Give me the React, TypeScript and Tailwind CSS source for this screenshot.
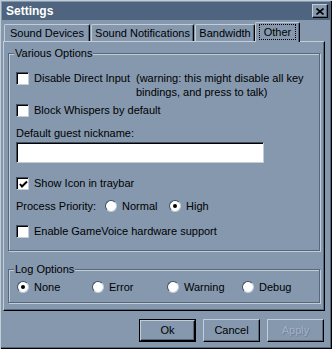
import React from 'react'

function Check({ checked = false }: { checked?: boolean }) {
  return (
    <span className="w-[13px] h-[13px] shrink-0 bg-white border border-t-[#3f4e60] border-l-[#3f4e60] border-r-[#c3cdd8] border-b-[#c3cdd8] shadow-[inset_1px_1px_0_#000] flex items-center justify-center">
      {checked && (
        <svg width="9" height="9" viewBox="0 0 9 9" className="ml-[1px] mt-[1px]">
          <polyline points="1,4 3,6.5 8,1.5" fill="none" stroke="#000" strokeWidth="2" />
        </svg>
      )}
    </span>
  )
}

function Radio({ on = false }: { on?: boolean }) {
  return (
    <span className="w-[12px] h-[12px] shrink-0 rounded-full bg-white border border-t-[#3f4e60] border-l-[#3f4e60] border-r-[#c3cdd8] border-b-[#c3cdd8] flex items-center justify-center">
      {on && <span className="w-[4px] h-[4px] rounded-full bg-black" />}
    </span>
  )
}

function CheckRow({ label, checked, className = '' }: { label: string; checked?: boolean; className?: string }) {
  return (
    <div className={`flex items-start leading-[14px] ${className}`}>
      <span className="mt-[1px]">
        <Check checked={checked} />
      </span>
      <span className="ml-[5px]">{label}</span>
    </div>
  )
}

export default function App() {
  const tabs = [
    { label: 'Sound Devices', w: 'w-[86px]' },
    { label: 'Sound Notifications', w: 'w-[103px]' },
    { label: 'Bandwidth', w: 'w-[60px]' },
  ]
  const logLevels = ['None', 'Error', 'Warning', 'Debug']

  return (
    <div className="w-[332px] h-[349px] bg-[#8598ae] font-['Liberation_Sans',Arial,sans-serif] text-[11px] text-black p-[2px] flex flex-col select-none shadow-[inset_1px_1px_0_#c3cdd8,inset_-1px_-1px_0_#000,inset_-2px_-2px_0_#56687c]">
      {/* Title bar */}
      <div className="h-[18px] bg-[#4e647f] flex items-center justify-between pl-[4px] pr-[2px]">
        <span className="text-white font-bold text-[12px] leading-none">Settings</span>
        <span className="w-[16px] h-[14px] bg-[#8598ae] border border-t-[#c3cdd8] border-l-[#c3cdd8] border-r-black border-b-black shadow-[inset_-1px_-1px_0_#56687c] flex items-center justify-center">
          <svg width="8" height="7" viewBox="0 0 8 7">
            <path d="M0.5 0.5 L7.5 6.5 M7.5 0.5 L0.5 6.5" stroke="#000" strokeWidth="1.6" />
          </svg>
        </span>
      </div>

      {/* Tabs */}
      <div className="mt-[2px] ml-[2px] flex items-end h-[19px]">
        {tabs.map((t, i) => (
          <div
            key={t.label}
            className={`${t.w} ${i > 0 ? 'ml-[1px]' : ''} h-[17px] rounded-tl-[2px] rounded-tr-[2px] border-t border-l border-r border-t-[#c3cdd8] border-l-[#c3cdd8] border-r-black shadow-[inset_-1px_0_0_#56687c] flex items-center justify-center leading-none`}
          >
            {t.label}
          </div>
        ))}
        <div className="relative z-10 w-[45px] h-[20px] -mb-px bg-[#8598ae] rounded-tl-[2px] rounded-tr-[2px] border-t border-l border-r border-t-[#c3cdd8] border-l-[#c3cdd8] border-r-black shadow-[inset_-1px_0_0_#56687c] flex items-start justify-center pt-[1px]">
          <span className="border border-dotted border-black px-[4px] leading-[14px]">Other</span>
        </div>
      </div>

      {/* Panel */}
      <div className="ml-[1px] w-[322px] h-[270px] border-t border-l border-r border-b border-t-[#c3cdd8] border-l-[#c3cdd8] border-r-black border-b-black shadow-[inset_-1px_-1px_0_#56687c] pt-[5px] pl-[4px]">
        <fieldset className="w-[312px] border border-[#56687c] shadow-[1px_1px_0_#c3cdd8,inset_1px_1px_0_#c3cdd8]">
          <legend className="ml-[5px] px-[1px] leading-[13px] bg-[#8598ae]">Various Options</legend>
          <div className="pl-[7px] pb-[12px]">
            <div className="mt-[11px] flex items-start leading-[14px]">
              <span className="mt-[1px]">
                <Check />
              </span>
              <span className="ml-[5px] w-[102px]">Disable Direct Input</span>
              <span>
                (warning: this might disable all key
                <br />
                bindings, and press to talk)
              </span>
            </div>
            <CheckRow className="mt-[4px]" label="Block Whispers by default" />
            <div className="mt-[9px] leading-[14px]">Default guest nickname:</div>
            <div className="mt-[2px] w-[248px] h-[21px] bg-white border border-t-[#3f4e60] border-l-[#3f4e60] border-r-[#c3cdd8] border-b-[#c3cdd8] shadow-[inset_1px_1px_0_#000]" />
            <CheckRow className="mt-[13px]" label="Show Icon in traybar" checked />
            <div className="mt-[9px] flex items-center leading-[14px]">
              <span className="w-[89px]">Process Priority:</span>
              <span className="w-[64px] flex items-center">
                <Radio />
                <span className="ml-[5px]">Normal</span>
              </span>
              <span className="flex items-center">
                <Radio on />
                <span className="ml-[5px]">High</span>
              </span>
            </div>
            <CheckRow className="mt-[11px]" label="Enable GameVoice hardware support" />
          </div>
        </fieldset>

        <fieldset className="mt-[12px] w-[312px] border border-[#56687c] shadow-[1px_1px_0_#c3cdd8,inset_1px_1px_0_#c3cdd8]">
          <legend className="ml-[5px] px-[1px] leading-[13px] bg-[#8598ae]">Log Options</legend>
          <div className="pl-[8px] pb-[8px] mt-[4px] flex leading-[14px]">
            {logLevels.map((l, i) => (
              <span key={l} className="w-[75px] flex items-center">
                <Radio on={i === 0} />
                <span className="ml-[5px]">{l}</span>
              </span>
            ))}
          </div>
        </fieldset>
      </div>

      {/* Buttons */}
      <div className="mt-[8px] pr-[6px] flex justify-end gap-[7px]">
        <button className="w-[57px] h-[23px] border border-black p-0">
          <span className="w-full h-full bg-[#8598ae] border border-t-[#c3cdd8] border-l-[#c3cdd8] border-r-black border-b-black shadow-[inset_-1px_-1px_0_#56687c] flex items-center justify-center">
            Ok
          </span>
        </button>
        <button className="w-[57px] h-[23px] bg-[#8598ae] border border-t-[#c3cdd8] border-l-[#c3cdd8] border-r-black border-b-black shadow-[inset_-1px_-1px_0_#56687c] flex items-center justify-center">
          Cancel
        </button>
        <button className="w-[57px] h-[23px] bg-[#8598ae] border border-t-[#c3cdd8] border-l-[#c3cdd8] border-r-black border-b-black shadow-[inset_-1px_-1px_0_#56687c] flex items-center justify-center text-[#a3b2c3] [text-shadow:1px_1px_0_#6f8196]">
          Apply
        </button>
      </div>
    </div>
  )
}
